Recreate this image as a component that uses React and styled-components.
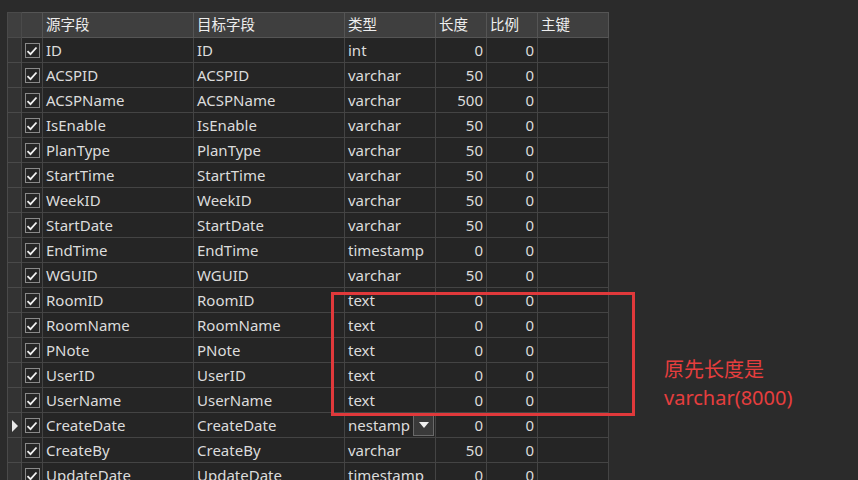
import React from "react";
import styled, { createGlobalStyle } from "styled-components";

const Global = createGlobalStyle`
  html, body { margin: 0; padding: 0; background: #2b2b2b; overflow: hidden; }
  body { font-family: "Noto Sans", "Noto Sans CJK SC", sans-serif; }
`;

const Page = styled.div`
  position: relative;
  width: 858px;
  height: 480px;
  padding: 12px 0 0 7px;
  box-sizing: border-box;
  overflow: hidden;
  background: #2b2b2b;
`;

const Table = styled.table`
  border-collapse: collapse;
  table-layout: fixed;
  width: 602px;
  font-size: 15px;
  color: #dcdcdc;
`;

const HeadCell = styled.th`
  height: 24px;
  padding: 0 3px;
  background: #3f3f3f;
  border: 1px solid #555;
  font-weight: normal;
  text-align: left;
  color: #eeeeee;
  font-family: "Noto Sans CJK SC", sans-serif;
  font-size: 14.5px;
  line-height: 20px;
  white-space: nowrap;
  overflow: hidden;
`;

const HeadText = styled.span`
  display: block;
  margin-top: -2px;
`;

const RowHead = styled.td`
  height: 24px;
  padding: 0;
  background: ${(p) => (p.$head ? "#3f3f3f" : "#333333")};
  border: 1px solid #4a4a4a;
  position: relative;
`;

const Cell = styled.td`
  height: 24px;
  padding: 0 3px;
  background: #252525;
  border: 1px solid #444;
  text-align: ${(p) => (p.$num ? "right" : "left")};
  white-space: nowrap;
  overflow: hidden;
  position: relative;
`;

const CheckCell = styled.td`
  height: 24px;
  padding: 0;
  background: #262626;
  border: 1px solid #444;
  text-align: center;
`;

const Box = styled.span`
  display: inline-flex;
  align-items: center;
  justify-content: center;
  width: 13px;
  height: 13px;
  border: 1px solid #8a8a8a;
  box-sizing: content-box;
  vertical-align: middle;
  margin-top: -2px;
`;

const Arrow = styled.span`
  position: absolute;
  left: 4px;
  top: 7px;
  width: 0;
  height: 0;
  border-top: 6px solid transparent;
  border-bottom: 6px solid transparent;
  border-left: 6px solid #e8e8e8;
`;

const DropBtn = styled.span`
  position: absolute;
  right: 1px;
  top: 1px;
  width: 19px;
  height: 20px;
  background: #3a3a3a;
  border: 1px solid #6a6a6a;
  display: flex;
  align-items: center;
  justify-content: center;
  &::after {
    content: "";
    border-left: 5px solid transparent;
    border-right: 5px solid transparent;
    border-top: 6px solid #f0f0f0;
  }
`;

const RedBox = styled.div`
  position: absolute;
  left: 331px;
  top: 292px;
  width: 298px;
  height: 118px;
  border: 3px solid #e0393b;
  pointer-events: none;
`;

const Note = styled.div`
  position: absolute;
  left: 664px;
  top: 356px;
  color: #e63e3e;
  font-family: "Noto Sans", "Noto Sans CJK SC", sans-serif;
  font-size: 20px;
  line-height: 28px;
`;

const Check = () => (
  <Box>
    <svg width="12" height="10" viewBox="0 0 12 10">
      <path d="M1.5 5.2 L4.5 8.2 L10.5 1.5" fill="none" stroke="#f2f2f2" strokeWidth="1.8" />
    </svg>
  </Box>
);

const rows = [
  ["ID", "ID", "int", 0, 0],
  ["ACSPID", "ACSPID", "varchar", 50, 0],
  ["ACSPName", "ACSPName", "varchar", 500, 0],
  ["IsEnable", "IsEnable", "varchar", 50, 0],
  ["PlanType", "PlanType", "varchar", 50, 0],
  ["StartTime", "StartTime", "varchar", 50, 0],
  ["WeekID", "WeekID", "varchar", 50, 0],
  ["StartDate", "StartDate", "varchar", 50, 0],
  ["EndTime", "EndTime", "timestamp", 0, 0],
  ["WGUID", "WGUID", "varchar", 50, 0],
  ["RoomID", "RoomID", "text", 0, 0],
  ["RoomName", "RoomName", "text", 0, 0],
  ["PNote", "PNote", "text", 0, 0],
  ["UserID", "UserID", "text", 0, 0],
  ["UserName", "UserName", "text", 0, 0],
  ["CreateDate", "CreateDate", "nestamp", 0, 0, true],
  ["CreateBy", "CreateBy", "varchar", 50, 0],
  ["UpdateDate", "UpdateDate", "timestamp", 0, 0],
];

const headers = ["源字段", "目标字段", "类型", "长度", "比例", "主键"];

export default function App() {
  return (
    <Page>
      <Global />
      <Table>
        <colgroup>
          <col style={{ width: 14 }} />
          <col style={{ width: 21 }} />
          <col style={{ width: 151 }} />
          <col style={{ width: 151 }} />
          <col style={{ width: 91 }} />
          <col style={{ width: 51 }} />
          <col style={{ width: 51 }} />
          <col style={{ width: 71 }} />
        </colgroup>
        <thead>
          <tr>
            <RowHead $head />
            <HeadCell />
            {headers.map((h) => (
              <HeadCell key={h}>
                <HeadText>{h}</HeadText>
              </HeadCell>
            ))}
          </tr>
        </thead>
        <tbody>
          {rows.map((r) => (
            <tr key={r[0]}>
              <RowHead>{r[5] && <Arrow />}</RowHead>
              <CheckCell>
                <Check />
              </CheckCell>
              <Cell>{r[0]}</Cell>
              <Cell>{r[1]}</Cell>
              <Cell>
                {r[2]}
                {r[5] && <DropBtn />}
              </Cell>
              <Cell $num>{r[3]}</Cell>
              <Cell $num>{r[4]}</Cell>
              <Cell />
            </tr>
          ))}
        </tbody>
      </Table>
      <RedBox />
      <Note>
        原先长度是
        <br />
        varchar(8000)
      </Note>
    </Page>
  );
}
